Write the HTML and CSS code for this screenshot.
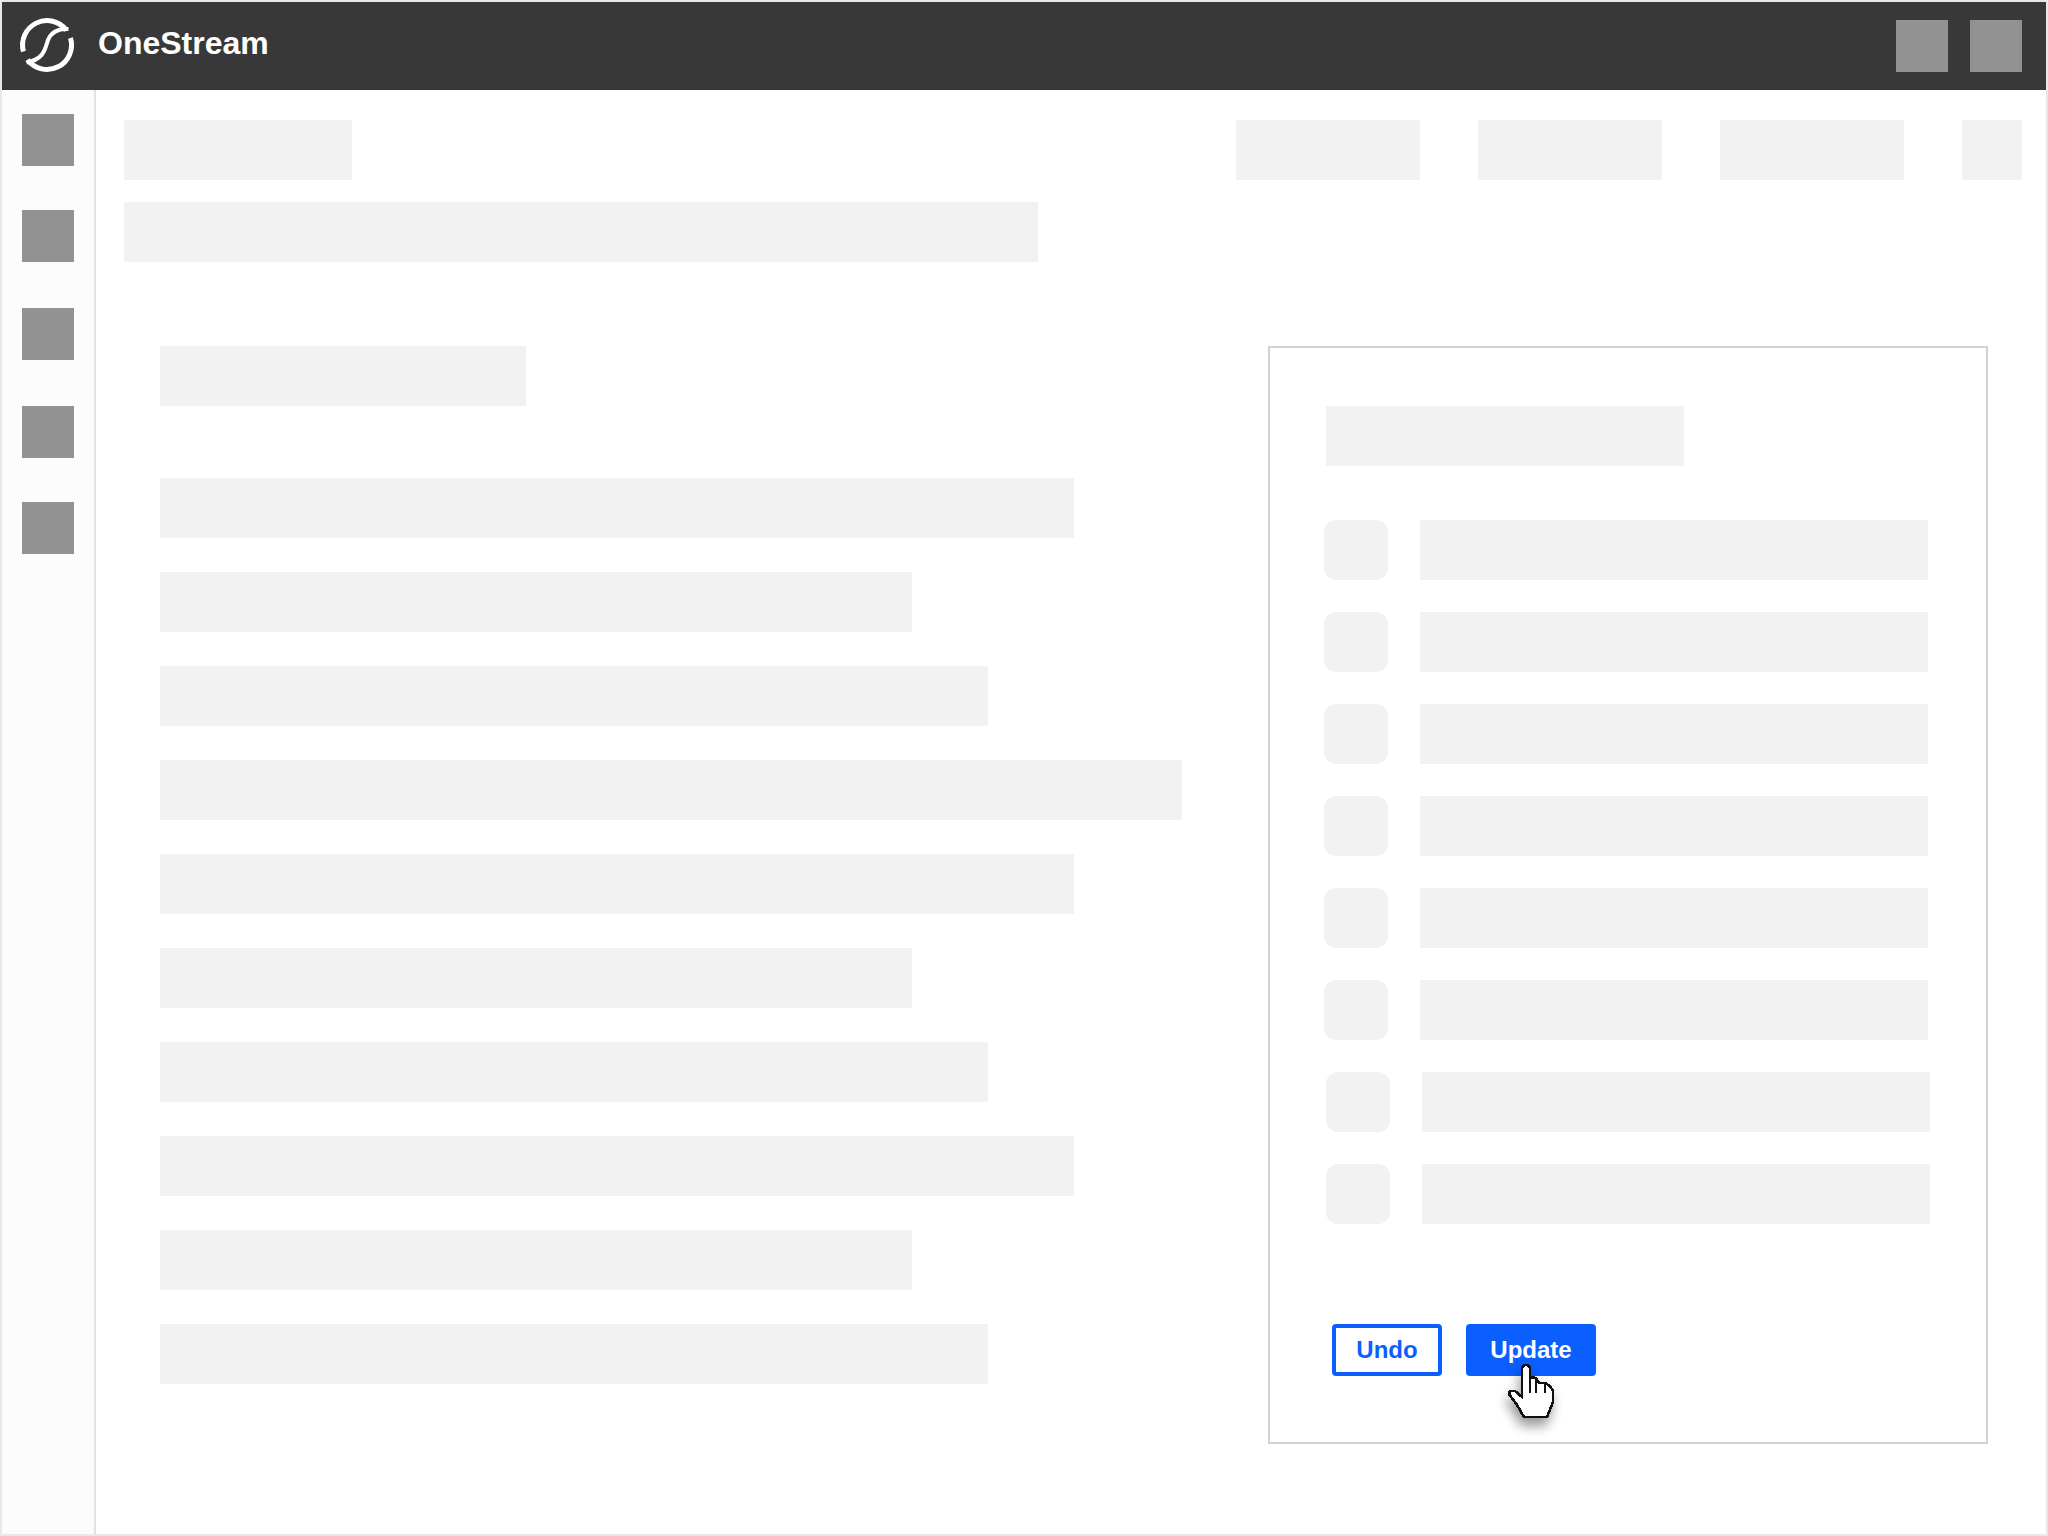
FILE: index.html
```html
<!DOCTYPE html>
<html lang="en">
<head>
<meta charset="utf-8">
<title>OneStream</title>
<link rel="stylesheet" href="styles.css">
</head>
<body>
<div class="app">
  <header class="header">
    <svg class="logo" viewBox="0 0 54 54" aria-hidden="true">
      <path class="logo-arc" d="M3.4 33.5A24.5 24.5 0 0 1 46.5 12.2"/>
      <path class="logo-s" d="M48.5 11C38 10.5 31 14.5 28 22C25 31 24 41.5 6.5 44.5"/>
      <path class="logo-arc" d="M7.5 41.8A24.5 24.5 0 0 0 50.5 20"/>
    </svg>
    <span class="brand">OneStream</span>
    <span class="header-actions">
      <i class="square"></i>
      <i class="square"></i>
    </span>
  </header>
  <div class="main">
    <nav class="sidebar">
      <i class="square"></i>
      <i class="square nav-tight"></i>
      <i class="square nav-wide"></i>
      <i class="square nav-wide"></i>
      <i class="square nav-tight"></i>
    </nav>
    <main class="content">
      <div class="toolbar">
        <i class="bar toolbar-title"></i>
        <span class="toolbar-tabs">
          <i class="bar tab"></i>
          <i class="bar tab"></i>
          <i class="bar tab"></i>
          <i class="bar tab-small"></i>
        </span>
      </div>
      <i class="bar subtitle"></i>
      <div class="body">
        <section class="list">
          <i class="bar list-title"></i>
          <i class="bar w-a"></i>
          <i class="bar w-b"></i>
          <i class="bar w-c"></i>
          <i class="bar w-d"></i>
          <i class="bar w-a"></i>
          <i class="bar w-b"></i>
          <i class="bar w-c"></i>
          <i class="bar w-a"></i>
          <i class="bar w-b"></i>
          <i class="bar w-c"></i>
        </section>
        <aside class="panel">
          <i class="bar panel-title"></i>
          <div class="rows">
            <div class="row"><i class="chip"></i><i class="bar row-bar"></i></div>
            <div class="row"><i class="chip"></i><i class="bar row-bar"></i></div>
            <div class="row"><i class="chip"></i><i class="bar row-bar"></i></div>
            <div class="row"><i class="chip"></i><i class="bar row-bar"></i></div>
            <div class="row"><i class="chip"></i><i class="bar row-bar"></i></div>
            <div class="row"><i class="chip"></i><i class="bar row-bar"></i></div>
            <div class="row row-shift"><i class="chip"></i><i class="bar row-bar"></i></div>
            <div class="row row-shift"><i class="chip"></i><i class="bar row-bar"></i></div>
          </div>
          <div class="actions">
            <button class="btn btn-outline" type="button">Undo</button>
            <button class="btn btn-solid" type="button">Update</button>
            <svg class="cursor" viewBox="0 0 52 60" aria-hidden="true">
              <path class="cursor-hand" d="M17 6L19 3H23L25 6V15L31 16L34 21H40L45 24L48 29V40L42 55H19L12 43L4 32L5 29H10L17 35Z"/>
              <path class="cursor-line" d="M25 15V31M31 16V31M40 21V31"/>
            </svg>
          </div>
        </aside>
      </div>
    </main>
  </div>
</div>
</body>
</html>
```
FILE: styles.css
```css
* { box-sizing: border-box; }

html, body { margin: 0; background: #fff; }

i { display: block; }

.app {
  width: 2048px;
  height: 1536px;
  border: 2px solid #e8e8e8;
  overflow: hidden;
  font-family: "Liberation Sans", Arial, sans-serif;
  background: #fff;
}

.square {
  width: 52px;
  height: 52px;
  background: #929292;
}

.bar {
  height: 60px;
  background: #f2f2f2;
}

/* header */
.header {
  display: flex;
  align-items: center;
  height: 88px;
  padding: 0 24px 0 18px;
  background: #383838;
}

.logo {
  width: 54px;
  height: 54px;
  margin: 0 24px 2px 0;
  overflow: visible;
  fill: none;
  stroke: #fff;
}

.logo-arc { stroke-width: 5; }
.logo-s { stroke-width: 4; }

.brand {
  padding-bottom: 6px;
  font-size: 32px;
  font-weight: 700;
  color: #fff;
}

.header-actions {
  display: flex;
  gap: 22px;
  margin-left: auto;
}

/* layout */
.main {
  display: flex;
  height: 1444px;
}

.sidebar {
  flex: none;
  width: 94px;
  padding: 24px 0 0 20px;
  background: #fcfcfc;
  border-right: 2px solid #e2e2e2;
}

.nav-tight { margin-top: 44px; }
.nav-wide { margin-top: 46px; }

.content {
  flex: 1;
  padding: 30px 24px 0 28px;
}

/* top bars */
.toolbar {
  display: flex;
  justify-content: space-between;
}

.toolbar-title { width: 228px; }

.toolbar-tabs {
  display: flex;
  gap: 58px;
}

.tab { width: 184px; }
.tab-small { width: 60px; }

.subtitle {
  width: 914px;
  margin-top: 22px;
}

/* body */
.body {
  display: flex;
  margin-top: 84px;
  padding-left: 36px;
}

.list {
  display: flex;
  flex: none;
  flex-direction: column;
  gap: 34px;
  width: 1108px;
}

.list-title {
  width: 366px;
  margin-bottom: 38px;
}

.w-a { width: 914px; }
.w-b { width: 752px; }
.w-c { width: 828px; }
.w-d { width: 1022px; }

/* panel */
.panel {
  flex: none;
  width: 720px;
  height: 1098px;
  padding: 58px 0 0 56px;
  border: 2px solid #d2d2d2;
}

.panel-title { width: 358px; }

.rows {
  display: flex;
  flex-direction: column;
  gap: 32px;
  margin-top: 54px;
}

.row {
  display: flex;
  gap: 32px;
  margin-left: -2px;
}

.row-shift { margin-left: 0; }

.chip {
  width: 64px;
  height: 60px;
  border-radius: 12px;
  background: #f2f2f2;
}

.row-bar { width: 508px; }

/* actions */
.actions {
  position: relative;
  display: flex;
  gap: 24px;
  margin: 100px 0 0 6px;
}

.btn {
  height: 52px;
  padding: 0;
  border-radius: 4px;
  font-family: inherit;
  font-size: 24px;
  font-weight: 700;
}

.btn-outline {
  width: 110px;
  border: 4px solid #0b5fff;
  background: #fff;
  color: #0b5fff;
}

.btn-solid {
  width: 130px;
  border: 0;
  background: #0b5fff;
  color: #fff;
}

.cursor {
  position: absolute;
  left: 173px;
  top: 38px;
  width: 52px;
  height: 60px;
  overflow: visible;
  filter: drop-shadow(-2px 8px 6px rgba(0, 0, 0, 0.4));
}

.cursor-hand {
  fill: #fff;
  stroke: #111;
  stroke-width: 2.6;
  stroke-linejoin: miter;
  shape-rendering: crispEdges;
}

.cursor-line {
  fill: none;
  stroke: #111;
  stroke-width: 2.6;
  shape-rendering: crispEdges;
}
```
